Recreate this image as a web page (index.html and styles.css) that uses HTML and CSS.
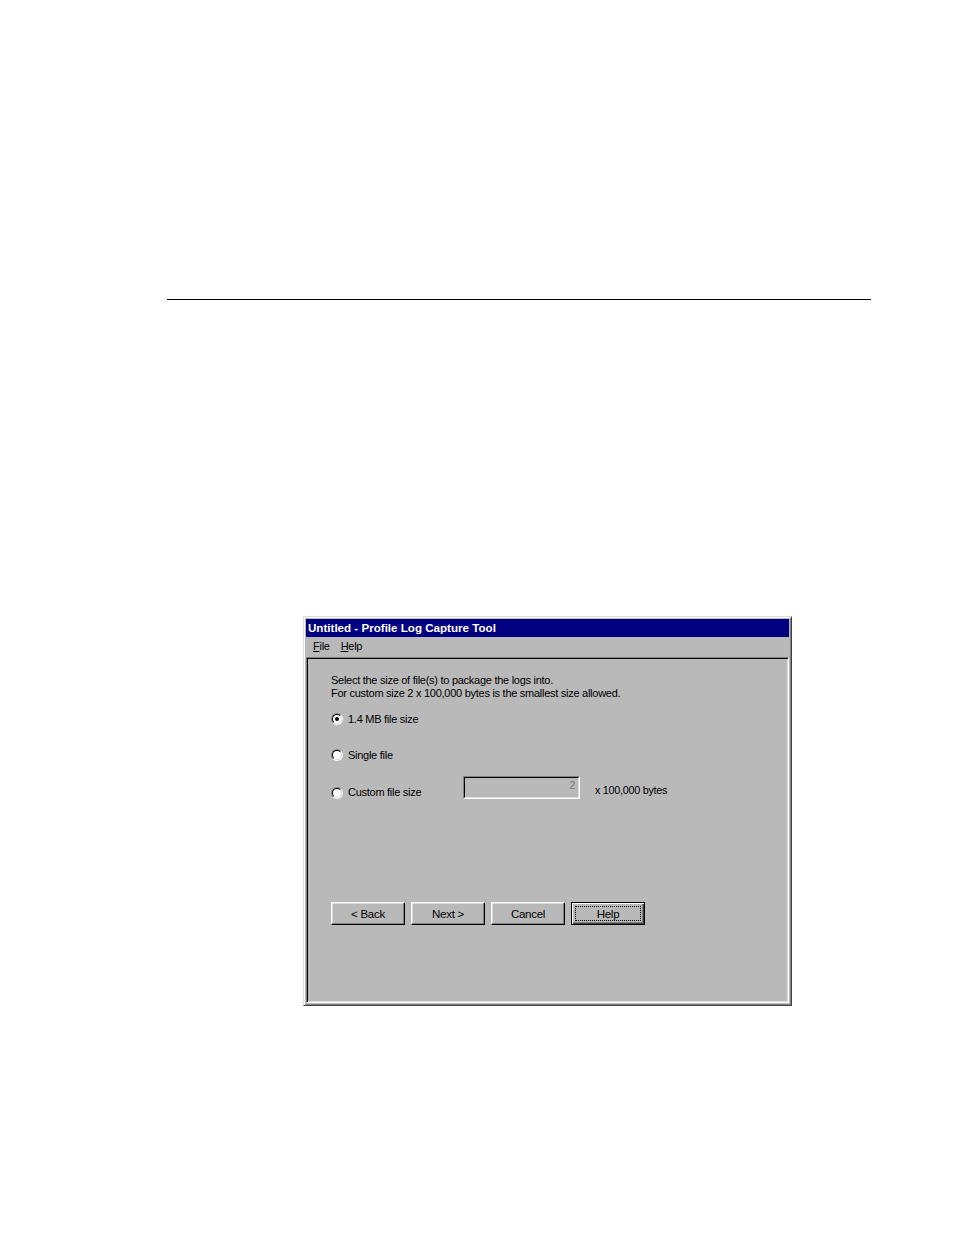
FILE: index.html
```html
<!DOCTYPE html>
<html>
<head>
<meta charset="utf-8">
<title>Profile Log Capture Tool</title>
<link rel="stylesheet" href="styles.css">
</head>
<body>
<div class="page">
  <div class="rule"></div>
  <div class="window">
    <div class="titlebar">Untitled - Profile Log Capture Tool</div>
    <div class="menubar">
      <span class="menu"><u>F</u>ile</span>
      <span class="menu"><u>H</u>elp</span>
    </div>
    <div class="client">
      <div class="intro">
        <div>Select the size of file(s) to package the logs into.</div>
        <div>For custom size 2 x 100,000 bytes is the smallest size allowed.</div>
      </div>
      <div class="option first">
        <span class="radio checked"><span class="radio-in"></span></span>
        <span class="label">1.4 MB file size</span>
      </div>
      <div class="option">
        <span class="radio"><span class="radio-in"></span></span>
        <span class="label">Single file</span>
      </div>
      <div class="option custom">
        <span class="radio"><span class="radio-in"></span></span>
        <span class="label wide">Custom file size</span>
        <span class="textbox"><span class="textbox-in">2</span></span>
        <span class="unit">x 100,000 bytes</span>
      </div>
      <div class="buttons">
        <button class="btn">&lt; Back</button>
        <button class="btn">Next &gt;</button>
        <button class="btn">Cancel</button>
        <button class="btn default"><span class="focus">Help</span></button>
      </div>
    </div>
  </div>
</div>
</body>
</html>
```
FILE: styles.css
```css
html, body {
  margin: 0;
  padding: 0;
  background: #fff;
}
.page {
  padding-top: 299px;
  padding-left: 167px;
  font-family: "Liberation Sans", Arial, sans-serif;
  font-size: 11px;
  letter-spacing: -0.27px;
  color: #000;
}
.rule {
  width: 704px;
  height: 0;
  border-top: 1px solid #000;
}
.window {
  box-sizing: border-box;
  margin-top: 316px;
  margin-left: 136px;
  width: 489px;
  height: 390px;
  background: #b9b9b9;
  border: 1px solid;
  border-color: #dcdcdc #404040 #404040 #dcdcdc;
  box-shadow: inset 1px 1px 0 #fff, inset -1px -1px 0 #808080;
  padding: 2px;
  display: flex;
  flex-direction: column;
}
.titlebar {
  height: 18px;
  background: #000080;
  color: #fff;
  font-weight: bold;
  font-size: 11.6px;
  letter-spacing: 0;
  line-height: 18px;
  padding-left: 2px;
}
.menubar {
  height: 19px;
  line-height: 19px;
  padding-left: 7px;
  display: flex;
  gap: 11px;
}
.menu u {
  text-decoration: underline;
  text-underline-offset: 1px;
}
.client {
  flex: 1;
  margin-top: 1px;
  border: 1px solid;
  border-color: #808080 #fff #fff #808080;
  box-shadow: inset 1px 1px 0 #000, inset -1px -1px 0 #dcdcdc;
  padding: 16px 0 0 24px;
}
.intro {
  line-height: 13px;
}
.option {
  display: flex;
  align-items: center;
  height: 16px;
  margin-top: 20px;
}
.option.first {
  margin-top: 11px;
}
.radio {
  box-sizing: border-box;
  width: 12px;
  height: 12px;
  border-radius: 50%;
  border: 1px solid;
  border-color: #808080 #fff #fff #808080;
  display: flex;
  flex: none;
}
.radio-in {
  box-sizing: border-box;
  flex: 1;
  border-radius: 50%;
  border: 1px solid;
  border-color: #000 #dcdcdc #dcdcdc #000;
  background: #fff;
  display: flex;
  align-items: center;
  justify-content: center;
}
.radio.checked .radio-in::after {
  content: "";
  width: 4px;
  height: 4px;
  border-radius: 50%;
  background: #000;
}
.label {
  margin-left: 5px;
}
.label.wide {
  width: 115px;
}
.option.custom {
  height: 22px;
  align-items: flex-start;
  margin-top: 13px;
}
.option.custom .radio {
  margin-top: 11px;
}
.option.custom .label {
  margin-top: 10px;
}
.textbox {
  box-sizing: border-box;
  width: 117px;
  height: 23px;
  border: 1px solid;
  border-color: #808080 #fff #fff #808080;
  display: flex;
}
.textbox-in {
  flex: 1;
  border: 1px solid;
  border-color: #000 #dcdcdc #dcdcdc #000;
  color: #7a7a7a;
  text-align: right;
  padding-right: 3px;
  line-height: 14px;
}
.unit {
  margin-left: 15px;
  margin-top: 8px;
  font-size: 10.8px;
}
.buttons {
  display: flex;
  gap: 6px;
  margin-top: 104px;
}
.btn {
  box-sizing: border-box;
  width: 74px;
  height: 23px;
  padding: 0;
  margin: 0;
  background: #b9b9b9;
  font: inherit;
  font-size: 11.5px;
  letter-spacing: inherit;
  color: #000;
  border: 1px solid;
  border-color: #fff #000 #000 #fff;
  box-shadow: inset -1px -1px 0 #808080, inset 1px 1px 0 #dcdcdc;
  display: flex;
  align-items: center;
  justify-content: center;
}
.btn.default {
  border: 1px solid #000;
  box-shadow: inset 1px 1px 0 #fff, inset -1px -1px 0 #404040, inset -2px -2px 0 #808080;
  padding: 3px;
}
.focus {
  flex: 1;
  align-self: stretch;
  border: 1px dotted #000;
  display: flex;
  align-items: center;
  justify-content: center;
}
```
